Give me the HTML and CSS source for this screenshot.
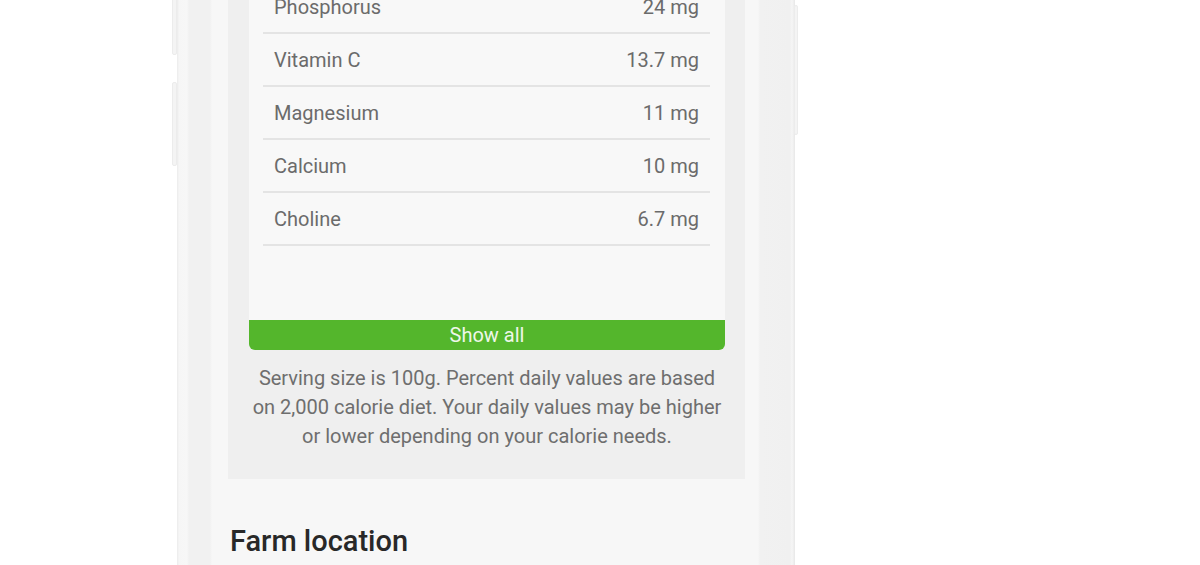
FILE: index.html
```html
<!DOCTYPE html>
<html lang="en">
<head>
  <meta charset="UTF-8">
  <meta name="viewport" content="width=device-width, initial-scale=1.0">
  <title>Nutrition facts</title>
  <link rel="stylesheet" href="styles.css">
</head>
<body>
  <div class="phone">
    <span class="side-key key-left-1"></span>
    <span class="side-key key-left-2"></span>
    <span class="side-key key-right"></span>

    <div class="screen">
      <div class="panel">
        <div class="card">
          <div class="row"><span>Phosphorus</span><span>24 mg</span></div>
          <div class="row"><span>Vitamin C</span><span>13.7 mg</span></div>
          <div class="row"><span>Magnesium</span><span>11 mg</span></div>
          <div class="row"><span>Calcium</span><span>10 mg</span></div>
          <div class="row"><span>Choline</span><span>6.7 mg</span></div>
        </div>
        <button class="show-all">Show all</button>
        <p class="note">
          Serving size is 100g. Percent daily values are based<br>
          on 2,000 calorie diet. Your daily values may be higher<br>
          or lower depending on your calorie needs.
        </p>
      </div>

      <h2 class="section-title">Farm location</h2>
    </div>
  </div>
</body>
</html>
```

FILE: styles.css
```css
/* Basic Reset */
* { box-sizing: border-box; margin: 0; padding: 0; }

body {
  background: #fff;
  font-family: Roboto, "Noto Sans", Arial, sans-serif;
  overflow: hidden;
  height: 565px;
}

/* Phone body */
.phone {
  position: relative;
  width: 618px;
  margin: -19px 0 0 177px;
  padding: 0 37px 0 35px;
  background: linear-gradient(90deg,
    #ebebeb 0, #f6f6f6 2px, #f7f7f7 10px, #f1f1f1 12px, #f1f1f1 33px,
    #f7f7f7 35px,
    #f7f7f7 calc(100% - 37px), #f1f1f1 calc(100% - 35px),
    #f0f0f0 calc(100% - 5px), #f6f6f6 calc(100% - 3px), #e8e8e8 100%);
  min-height: 620px;
}

.side-key {
  position: absolute;
  width: 5px;
  background: #f4f4f4;
  border: 1px solid #ececec;
  border-radius: 2px;
}
.key-left-1 { left: -5px; top: 0; height: 74px; }
.key-left-2 { left: -5px; top: 101px; height: 84px; }
.key-right { right: -3px; top: 24px; height: 130px; width: 4px; }

/* Screen */
.screen {
  background: #f7f7f7;
  padding: 0 13px 0 16px;
  min-height: 620px;
}

.panel {
  background: #efefef;
  padding: 0 20px 28px 21px;
}

.card {
  background: #f8f8f8;
  padding: 0 15px 74px 14px;
}

.row {
  display: flex;
  justify-content: space-between;
  align-items: center;
  height: 53px;
  padding: 0 11px;
  border-bottom: 2px solid #e4e4e4;
  font-size: 20px;
  color: #6b6b6b;
}

.show-all {
  display: block;
  width: 100%;
  height: 30px;
  border: none;
  border-radius: 0 0 6px 6px;
  background: #54b62c;
  color: #eef7e9;
  font-family: inherit;
  font-size: 20px;
}

.note {
  margin-top: 14px;
  text-align: center;
  font-size: 20px;
  line-height: 29px;
  color: #6e6e6e;
}

.section-title {
  margin: 45px 0 0 2px;
  font-size: 29px;
  font-weight: 500;
  color: #282828;
}
```
